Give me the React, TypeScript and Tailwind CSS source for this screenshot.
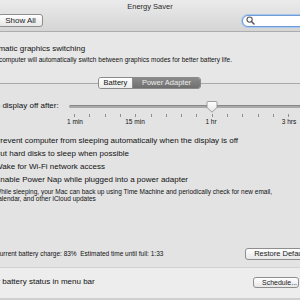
import React from "react";

function Check() {
  return (
    <span className="inline-block w-[10px] h-[10px] shrink-0 rounded-[2px] border border-[#8c8c8c] bg-gradient-to-b from-white to-[#e6e6e6]" />
  );
}

const ticks = Array.from({ length: 16 }, (_, k) => k);

function Slider() {
  return (
    <div className="relative w-[240px] h-[26px] shrink-0">
      <div className="absolute left-0 right-0 top-[4px] h-[3px] rounded-full bg-[#a9a9a9] border-t border-[#878787]" />
      {ticks.map((k) => (
        <div
          key={k}
          className="absolute top-[13px] w-px h-[3px] bg-[#8e8e8e]"
          style={{ left: 5 + 15.3 * k }}
        />
      ))}
      <svg className="absolute left-[137px] top-0" width="12" height="12" viewBox="0 0 12 12">
        <defs>
          <linearGradient id="tg" x1="0" y1="0" x2="0" y2="1">
            <stop offset="0" stopColor="#ffffff" />
            <stop offset="1" stopColor="#e4e4e4" />
          </linearGradient>
        </defs>
        <path
          d="M2 0.5 H10 Q11 0.5 11 1.5 V6.5 L6 11.2 L1 6.5 V1.5 Q1 0.5 2 0.5 Z"
          fill="url(#tg)"
          stroke="#8a8a8a"
          strokeWidth="0.8"
        />
      </svg>
      <span className="absolute top-[17px] left-[6px] -translate-x-1/2 text-[6.5px] leading-[8px] whitespace-nowrap">1 min</span>
      <span className="absolute top-[17px] left-[66px] -translate-x-1/2 text-[6.5px] leading-[8px] whitespace-nowrap">15 min</span>
      <span className="absolute top-[17px] left-[142px] -translate-x-1/2 text-[6.5px] leading-[8px] whitespace-nowrap">1 hr</span>
      <span className="absolute top-[17px] left-[220px] -translate-x-1/2 text-[6.5px] leading-[8px] whitespace-nowrap">3 hrs</span>
    </div>
  );
}

export default function App() {
  return (
    <div className="w-[300px] h-[300px] overflow-hidden bg-[#e7e7e7] font-['Liberation_Sans',Arial,sans-serif] text-[#111] flex flex-col">
      {/* Toolbar */}
      <div className="h-[32px] shrink-0 bg-gradient-to-b from-[#ebebeb] to-[#d5d5d5] border-b border-[#adadad] flex flex-col">
        <div className="h-[13px] flex items-center justify-center text-[7.5px] leading-none text-[#2a2a2a]">
          Energy Saver
        </div>
        <div className="h-[15px] flex items-center justify-between">
          <button className="ml-[-2px] w-[45px] h-[13px] rounded-[3px] border border-[#8e8e8e] bg-gradient-to-b from-white to-[#e7e7e7] text-[8px] leading-none text-[#1a1a1a] flex items-center justify-center">
            Show All
          </button>
          <div className="mr-[-30px] w-[88px] h-[12px] rounded-full border border-[#6f9bd6] bg-white shadow-[0_0_0_1px_#aac7ee] flex items-center pl-[3px]">
            <svg width="9" height="9" viewBox="0 0 9 9">
              <circle cx="3.6" cy="3.6" r="2.6" fill="none" stroke="#555" strokeWidth="1.1" />
              <line x1="5.5" y1="5.5" x2="8" y2="8" stroke="#555" strokeWidth="1.5" strokeLinecap="round" />
            </svg>
          </div>
        </div>
      </div>

      {/* Graphics switching */}
      <div className="mt-[12px] h-[10px] flex items-center ml-[-32px] gap-[4px] whitespace-nowrap">
        <Check />
        <span className="text-[8px] leading-[10px]">Automatic graphics switching</span>
      </div>
      <div className="mt-[2px] ml-[-16px] text-[6.5px] leading-[8px] whitespace-nowrap">
        Your computer will automatically switch between graphics modes for better battery life.
      </div>

      {/* Tabs */}
      <div className="mt-[13px] pl-[98px] flex relative z-10">
        <div className="flex h-[12px] rounded-[3px] border border-[#8a8a8a] overflow-hidden text-[7.5px] leading-none">
          <div className="w-[34px] flex items-center justify-center bg-gradient-to-b from-white to-[#ebebeb] text-[#111] border-r border-[#8a8a8a]">
            Battery
          </div>
          <div className="w-[67px] flex items-center justify-center bg-gradient-to-b from-[#8a8a8a] to-[#6f6f6f] text-[#ececec]">
            Power Adapter
          </div>
        </div>
      </div>

      {/* Tab box */}
      <div className="-mt-[6px] ml-[-30px] w-[360px] h-[185px] shrink-0 bg-[#e3e3e3] border-t border-b border-t-[#a9a9a9] border-b-[#d2d2d2] flex flex-col">
        <div className="mt-[17px] flex items-start pl-[14px]">
          <span className="w-[85px] shrink-0 text-[8px] leading-[10px] whitespace-nowrap">Turn display off after:</span>
          <Slider />
        </div>

        <div className="mt-[7.5px] flex flex-col pl-[11px] text-[8px] whitespace-nowrap">
          <div className="h-[13px] flex items-center gap-[4px]">
            <Check />
            <span>Prevent computer from sleeping automatically when the display is off</span>
          </div>
          <div className="h-[13px] flex items-center gap-[4px]">
            <Check />
            <span>Put hard disks to sleep when possible</span>
          </div>
          <div className="h-[13px] flex items-center gap-[4px]">
            <Check />
            <span>Wake for Wi-Fi network access</span>
          </div>
          <div className="h-[13px] flex items-center gap-[4px]">
            <Check />
            <span>Enable Power Nap while plugged into a power adapter</span>
          </div>
        </div>
        <div className="mt-[1.5px] pl-[25px] text-[6.5px] leading-[7px] whitespace-nowrap">
          <div>While sleeping, your Mac can back up using Time Machine and periodically check for new email,</div>
          <div>calendar, and other iCloud updates</div>
        </div>

        <div className="mt-auto mb-[7px] h-[12px] flex items-center justify-between pl-[25px] pr-[11px] whitespace-nowrap">
          <span className="text-[6.5px] leading-none">Current battery charge: 83%&nbsp;&nbsp;Estimated time until full: 1:33</span>
          <button className="h-[12px] px-[8px] rounded-[3px] border border-[#8e8e8e] bg-gradient-to-b from-white to-[#e7e7e7] text-[7.5px] leading-none text-[#1a1a1a] flex items-center">
            Restore Defaults
          </button>
        </div>
      </div>

      {/* Bottom */}
      <div className="flex-1 bg-[#ededed] flex flex-col">
        <div className="mt-[8px] h-[12px] flex items-center justify-between pr-[1px] whitespace-nowrap">
          <div className="flex items-center gap-[4px] ml-[-34px]">
            <Check />
            <span className="text-[8px] leading-none">Show battery status in menu bar</span>
          </div>
          <button className="h-[11px] w-[46px] pl-[8px] rounded-[3px] border border-[#8e8e8e] bg-gradient-to-b from-white to-[#e7e7e7] text-[7px] leading-none text-[#1a1a1a] flex items-center">
            Schedule...
          </button>
        </div>
        <div className="mt-auto h-[2px] bg-[#cfcfcf]" />
      </div>
    </div>
  );
}
